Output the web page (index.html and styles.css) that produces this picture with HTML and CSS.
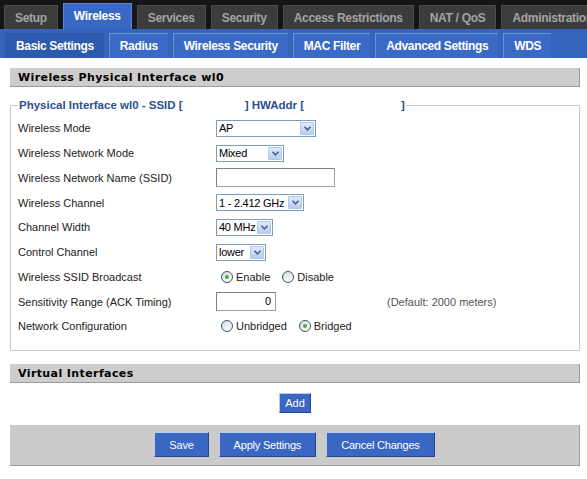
FILE: index.html
```html
<!DOCTYPE html>
<html>
<head>
<meta charset="utf-8">
<link rel="stylesheet" href="styles.css">
</head>
<body>
<div class="topnav">
  <div class="tab">Setup</div>
  <div class="tab active">Wireless</div>
  <div class="tab">Services</div>
  <div class="tab">Security</div>
  <div class="tab">Access Restrictions</div>
  <div class="tab">NAT / QoS</div>
  <div class="tab">Administration</div>
</div>
<div class="subnav">
  <div class="stab active">Basic Settings</div>
  <div class="stab">Radius</div>
  <div class="stab">Wireless Security</div>
  <div class="stab">MAC Filter</div>
  <div class="stab">Advanced Settings</div>
  <div class="stab">WDS</div>
</div>
<div class="content">
  <h2 class="section">Wireless Physical Interface wl0</h2>
  <fieldset class="group">
    <legend>Physical Interface wl0 - SSID [<span class="gap1"></span>] HWAddr [<span class="gap2"></span>]</legend>
    <div class="row"><div class="label">Wireless Mode</div><div class="sel w100"><span class="val">AP</span><span class="arr"><svg viewBox="0 0 10 8" width="9" height="7"><path d="M1.5 2 L5 5.5 L8.5 2" fill="none" stroke="#4d6185" stroke-width="1.8"/></svg></span></div></div>
    <div class="row"><div class="label">Wireless Network Mode</div><div class="sel w68"><span class="val">Mixed</span><span class="arr"><svg viewBox="0 0 10 8" width="9" height="7"><path d="M1.5 2 L5 5.5 L8.5 2" fill="none" stroke="#4d6185" stroke-width="1.8"/></svg></span></div></div>
    <div class="row"><div class="label">Wireless Network Name (SSID)</div><div class="txt w119"></div></div>
    <div class="row"><div class="label">Wireless Channel</div><div class="sel w88"><span class="val">1 - 2.412 GHz</span><span class="arr"><svg viewBox="0 0 10 8" width="9" height="7"><path d="M1.5 2 L5 5.5 L8.5 2" fill="none" stroke="#4d6185" stroke-width="1.8"/></svg></span></div></div>
    <div class="row"><div class="label">Channel Width</div><div class="sel w57"><span class="val">40 MHz</span><span class="arr"><svg viewBox="0 0 10 8" width="9" height="7"><path d="M1.5 2 L5 5.5 L8.5 2" fill="none" stroke="#4d6185" stroke-width="1.8"/></svg></span></div></div>
    <div class="row"><div class="label">Control Channel</div><div class="sel w50"><span class="val">lower</span><span class="arr"><svg viewBox="0 0 10 8" width="9" height="7"><path d="M1.5 2 L5 5.5 L8.5 2" fill="none" stroke="#4d6185" stroke-width="1.8"/></svg></span></div></div>
    <div class="row"><div class="label">Wireless SSID Broadcast</div><div class="radios"><span class="radio on"></span><span class="rlabel">Enable</span><span class="radio"></span><span class="rlabel">Disable</span></div></div>
    <div class="row"><div class="label">Sensitivity Range (ACK Timing)</div><div class="txt w60 num">0</div><span class="default">(Default: 2000 meters)</span></div>
    <div class="row"><div class="label">Network Configuration</div><div class="radios"><span class="radio"></span><span class="rlabel">Unbridged</span><span class="radio on"></span><span class="rlabel">Bridged</span></div></div>
  </fieldset>
  <h2 class="section vi">Virtual Interfaces</h2>
  <div class="addrow"><span class="btn small">Add</span></div>
  <div class="submit">
    <span class="btn">Save</span>
    <span class="btn">Apply Settings</span>
    <span class="btn">Cancel Changes</span>
  </div>
</div>
</body>
</html>
```
FILE: styles.css
```css
html, body { margin: 0; padding: 0; background: #fff; }
body { font-family: "Liberation Sans", Arial, sans-serif; font-size: 11px; color: #000; width: 587px; overflow: hidden; }

.topnav { background: #151515; height: 29px; display: flex; align-items: flex-end; gap: 5px; padding-left: 4px; white-space: nowrap; overflow: hidden; }
.tab { background: #3c3c3c; color: #a4a4a4; font-weight: bold; font-size: 12px; letter-spacing: -0.3px; height: 24px; line-height: 25px; padding: 0 10px; flex: none; box-sizing: border-box; border: 1px solid #4a4a4a; border-bottom: none; }
.tab.active { background: #3868c3; color: #fff; height: 27px; line-height: 25px; margin-bottom: -1px; border-color: #5a85d6; position: relative; z-index: 1; }

.subnav { background: #3365bd; height: 29px; display: flex; align-items: flex-end; gap: 5px; padding-left: 5px; box-sizing: border-box; }
.stab { background: #3b6ac6; color: #fff; font-weight: bold; font-size: 12px; letter-spacing: -0.35px; height: 25px; line-height: 24px; padding: 0 10px; box-sizing: border-box; border-left: 1px solid #6b91d9; border-top: 1px solid #6b91d9; flex: none; }
.stab.active { background: #2d5aac; border-color: #2d5aac; }

.content { padding: 10px 7px 0 10px; }
.section { margin: 0; background: #cdcdcd; height: 19px; line-height: 19px; padding-left: 8px; font-family: "DejaVu Sans", Verdana, sans-serif; font-size: 11px; font-weight: bold; letter-spacing: 0.4px; color: #000; border-bottom: 1px solid #9a9a9a; border-right: 1px solid #9a9a9a; box-sizing: border-box; }

.group { margin: 12px 0 0 0; padding: 5px 0 11px 7px; border: 1px solid #c8c8c8; min-width: 0; }
.group legend { color: #2b4f8f; font-weight: bold; font-size: 11.5px; padding: 0 1px; margin-left: 0; font-family: "Liberation Sans", Tahoma, sans-serif; }
.gap1 { display: inline-block; width: 62px; }
.gap2 { display: inline-block; width: 97px; }

.row { display: flex; align-items: center; height: 24.75px; }
.label { width: 198px; flex: none; color: #222; }

.sel { height: 17px; box-sizing: border-box; border: 1px solid #7f9db9; display: flex; align-items: center; justify-content: space-between; background: #fff; font-size: 11px; letter-spacing: -0.25px; white-space: nowrap; }
.sel .val { padding-left: 2px; }
.sel .arr { width: 14px; height: 13px; margin-right: 1px; background: linear-gradient(#dfe9fb, #b7cdf4); border: 1px solid #b1c6ec; box-sizing: border-box; display: flex; align-items: center; justify-content: center; border-radius: 1px; flex: none; }
.w100 { width: 100px; } .w68 { width: 68px; } .w88 { width: 88px; } .w57 { width: 57px; } .w50 { width: 50px; }
.txt { height: 19px; box-sizing: border-box; border: 1px solid #a0a0a0; border-top-color: #808080; border-left-color: #808080; background: #fff; }
.w119 { width: 119px; } .w60 { width: 60px; }
.num { text-align: right; line-height: 17px; padding-right: 4px; }
.default { margin-left: 111px; color: #555; }

.radios { display: flex; align-items: center; padding-left: 5px; }
.radio { width: 12px; height: 12px; border-radius: 50%; box-sizing: border-box; border: 1px solid #2f5778; background: linear-gradient(135deg, #dcdcd6, #fff); position: relative; flex: none; }
.radio.on::after { content: ""; position: absolute; left: 3px; top: 3px; width: 4px; height: 4px; border-radius: 50%; background: #3fb13f; }
.rlabel { margin-left: 3px; margin-right: 12px; color: #222; }

.vi { margin-top: 13px; }
.addrow { display: flex; justify-content: center; padding: 10px 0 12px 0; }
.btn { display: inline-block; background: #3a66c4; color: #fff; font-size: 11px; letter-spacing: -0.2px; height: 25px; line-height: 24px; padding: 0 14px; box-sizing: border-box; border-left: 1px solid #b8c9ec; border-top: 1px solid #b8c9ec; border-right: 1px solid #26478a; border-bottom: 1px solid #26478a; }
.btn.small { height: 20px; line-height: 19px; padding: 0 5px; font-size: 11px; letter-spacing: 0; }
.submit { background: #cbcbcb; height: 41px; display: flex; align-items: center; justify-content: center; gap: 10px; border-bottom: 1px solid #9a9a9a; border-right: 1px solid #9a9a9a; box-sizing: border-box; }
```
